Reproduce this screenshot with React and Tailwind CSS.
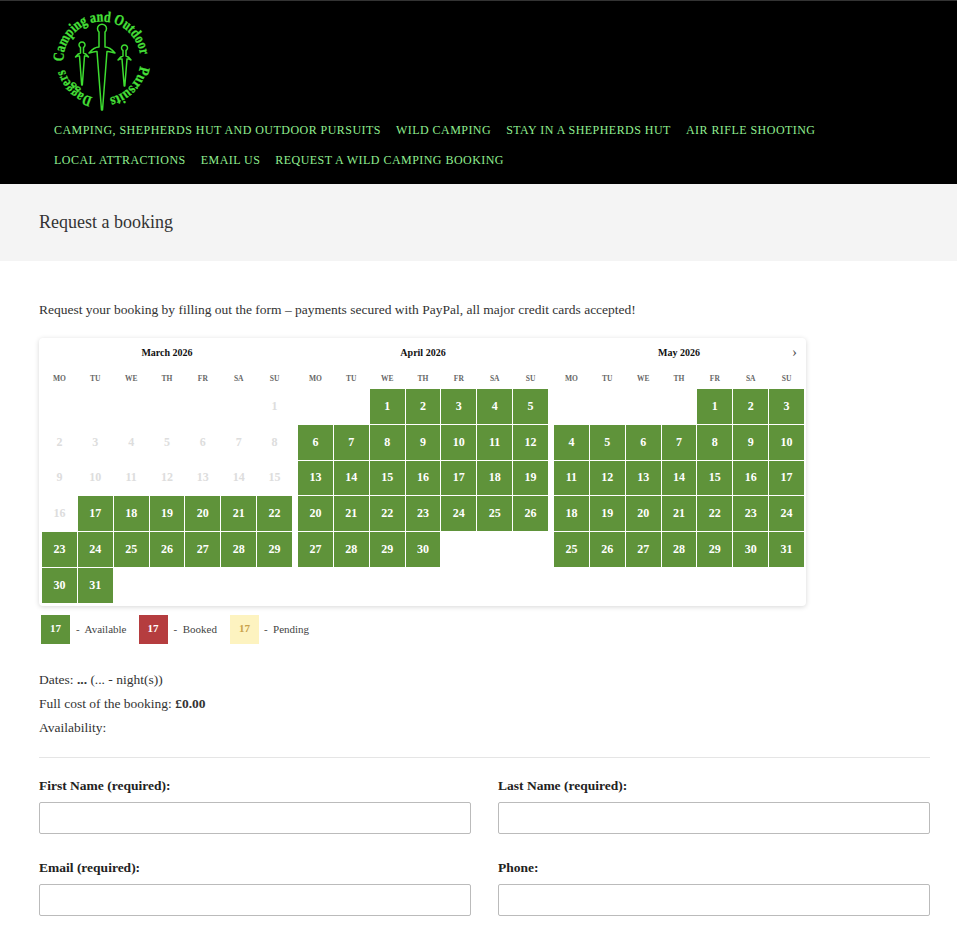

const serif = { fontFamily: '"Liberation Serif", serif' };
const days = ["MO","TU","WE","TH","FR","SA","SU"];
const months = [
  { name: "March 2026", offset: 6, count: 31, firstFree: 17, cls: "w-[256px]" },
  { name: "April 2026", offset: 2, count: 30, firstFree: 1, cls: "w-[256px]" },
  { name: "May 2026", offset: 4, count: 31, firstFree: 1, cls: "w-[255px]" },
];

function Month({ m, next }) {
  const blanks = Array.from({ length: m.offset });
  const nums = Array.from({ length: m.count }, (_, i) => i + 1);
  return (
    <div className={"relative pl-[3px] " + m.cls}>
      <div className="w-[250px]">
        <div className="h-[30px] pt-[8px] text-center text-[10px] leading-[14px] font-bold text-[#111]">{m.name}</div>
        {next && <span className="absolute right-[9px] top-[5px] text-[15px] leading-[18px] text-[#555]">›</span>}
        <div className="grid grid-cols-7 gap-px">
          {days.map((d) => (
            <div key={d} className="h-[20px] pt-[6px] text-center text-[7.5px] leading-[10px] font-bold text-[#666]">{d}</div>
          ))}
          {blanks.map((_, i) => <div key={"b" + i} className="h-[34.8px]" />)}
          {nums.map((n) => n >= m.firstFree ? (
            <div key={n} className="flex h-[34.8px] items-center justify-center pb-[1px] bg-[#5f933a] text-[12px] font-bold text-white">{n}</div>
          ) : (
            <div key={n} className="flex h-[34.8px] items-center justify-center pb-[1px] text-[12px] font-bold text-[#dddddd]">{n}</div>
          ))}
        </div>
      </div>
    </div>
  );
}

function Logo() {
  return (
    <svg width="104" height="104" viewBox="0 0 104 104" className="block overflow-visible">
      <defs>
        <path id="ring" d="M 13.5 50 A 38.5 38.5 0 1 1 90.5 50 A 38.5 38.5 0 1 1 13.5 50" />
      </defs>
      <g fill="none" stroke="#3ddc30" strokeWidth="1.5" strokeLinejoin="round">
        <path d="M49 22 a4.5 4.5 0 1 1 6 0 L55 37 Q60 37 65 43 Q59 41 57 41.5 L52.5 100 L51.5 100 L47 41.5 Q45 41 39 43 Q44 37 49 37 Z" />
        <path d="M30.5 37.5 a3 3 0 1 1 3 0 L33.5 43 Q36 43.5 38.5 47 Q35.5 45.5 34.5 46 L32.3 75 L31.7 75 L29.5 46 Q28.5 45.5 25.5 47 Q28 43.5 30.5 43 Z" />
        <path d="M73 40.5 a3 3 0 1 1 3 0 L76 46 Q78.5 46.5 81 50 Q78 48.5 77 49 L74.8 76 L74.2 76 L72 49 Q71 48.5 68 50 Q70.5 46.5 73 46 Z" />
      </g>
      <g transform="rotate(-2 52 50)" fill="#46e038" stroke="#46e038" strokeWidth="0.3" style={{ fontFamily: '"Liberation Serif", serif', fontWeight: 700, fontSize: "15px" }}>
        <text><textPath href="#ring" startOffset="0" textLength="117" lengthAdjust="spacingAndGlyphs">Camping and Outdoor</textPath></text>
        <text><textPath href="#ring" startOffset="128" textLength="47" lengthAdjust="spacingAndGlyphs">Pursuits</textPath></text>
        <text><textPath href="#ring" startOffset="192" textLength="41" lengthAdjust="spacingAndGlyphs">Daggers</textPath></text>
      </g>
    </svg>
  );
}

export default function App() {
  return (
    <div className="min-h-[925px] overflow-hidden bg-white text-[#333]" style={serif}>
      <header className="h-[184px] border-t border-[#333] bg-black pl-[50px]">
        <div className="h-[114px] pt-[9px]"><Logo /></div>
        <nav className="pl-[4px] text-[12px] leading-[30px] tracking-[0.46px] text-[#90ee90]">
          <div className="flex gap-[15px]">
            <span>CAMPING, SHEPHERDS HUT AND OUTDOOR PURSUITS</span>
            <span>WILD CAMPING</span>
            <span>STAY IN A SHEPHERDS HUT</span>
            <span>AIR RIFLE SHOOTING</span>
          </div>
          <div className="flex gap-[15px]">
            <span>LOCAL ATTRACTIONS</span>
            <span>EMAIL US</span>
            <span>REQUEST A WILD CAMPING BOOKING</span>
          </div>
        </nav>
      </header>
      <div className="flex h-[77px] items-center bg-[#f4f4f4] px-[39px] text-[18px] text-[#333]">Request a booking</div>
      <main className="pr-[27px] pl-[39px] pt-[40px]">
        <p className="text-[13.5px] leading-[18px] text-[#333]">Request your booking by filling out the form – payments secured with PayPal, all major credit cards accepted!</p>
        <div className="mt-[19px] flex w-[767px] rounded-[4px] bg-white pb-[3px] shadow-[0_1px_5px_rgba(0,0,0,0.16)]">
          {months.map((m, i) => <Month key={m.name} m={m} next={i === 2} />)}
        </div>
        <div className="mt-[9px] flex items-center pl-[2px] text-[11px] text-[#444]">
          <span className="flex h-[29px] w-[29px] items-center justify-center pb-[2px] bg-[#5f933a] font-bold text-white">17</span>
          <span className="ml-[6px]">-&nbsp; Available</span>
          <span className="ml-[12px] flex h-[29px] w-[29px] items-center justify-center pb-[2px] bg-[#b53d3f] font-bold text-white">17</span>
          <span className="ml-[6px]">-&nbsp; Booked</span>
          <span className="ml-[13px] flex h-[29px] w-[29px] items-center justify-center pb-[2px] bg-[#fdf3c0] font-bold text-[#c9a24a]">17</span>
          <span className="ml-[5px]">-&nbsp; Pending</span>
        </div>
        <div className="mt-[24px] text-[13.5px] leading-[24px] text-[#333]">
          <div>Dates: <b>...</b> (... - night(s))</div>
          <div>Full cost of the booking: <b>£0.00</b></div>
          <div>Availability:</div>
        </div>
        <hr className="mt-[17px] border-[#e5e5e5]" />
        <div className="mt-[19px] grid grid-cols-2 gap-x-[27px] gap-y-[25px]">
          {["First Name (required):", "Last Name (required):", "Email (required):", "Phone:"].map((l) => (
            <div key={l}>
              <div className="text-[13.5px] leading-[18px] font-bold text-[#222]">{l}</div>
              <div className="mt-[7px] h-[32px] rounded-[2px] border border-[#bbbbbb] bg-white" />
            </div>
          ))}
        </div>
      </main>
    </div>
  );
}
